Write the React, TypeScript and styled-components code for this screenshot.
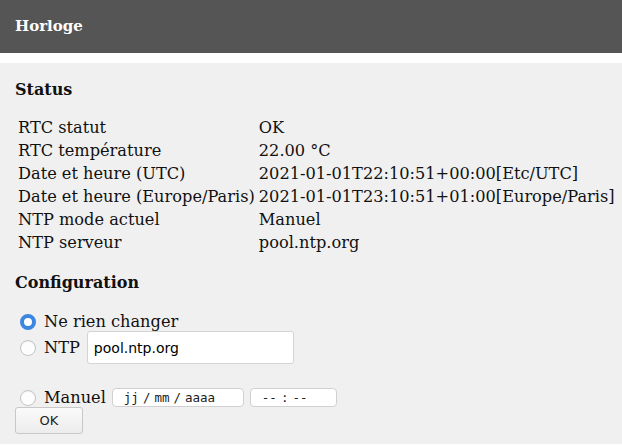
import React from 'react'
import styled, { createGlobalStyle } from 'styled-components'

const GlobalStyle = createGlobalStyle`
  html, body {
    margin: 0;
    padding: 0;
    background: #ffffff;
  }
  body {
    font-family: "DejaVu Serif", serif;
    color: #111;
  }
`

const TopBar = styled.header`
  height: 53px;
  background: #555555;
  display: flex;
  align-items: center;
  padding-left: 15px;
  margin-bottom: 10px;
`

const Title = styled.h1`
  margin: 0 0 2px;
  font-size: 15px;
  font-weight: 700;
  color: #ffffff;
`

const Panel = styled.main`
  background: #f0f0f0;
  padding: 16px 15px 10px;
  min-height: 372px;
  box-sizing: border-box;
`

const SectionTitle = styled.h2<{ $after?: number }>`
  margin: 0 0 ${p => p.$after ?? 14}px;
  font-size: 16px;
  font-weight: 700;
  line-height: 22px;
`

const StatusTable = styled.table`
  border-collapse: separate;
  border-spacing: 2px;
  font-size: 16.2px;
  margin-bottom: 17px;

  td {
    padding: 1px 1px;
    line-height: 19px;
    white-space: nowrap;
  }
`

const OptionRow = styled.label<{ $gap?: number }>`
  display: flex;
  align-items: center;
  font-size: 16.2px;
  margin-top: ${p => p.$gap ?? 0}px;
`

const Radio = styled.input.attrs({ type: 'radio', name: 'mode' })`
  appearance: none;
  width: 16px;
  height: 16px;
  margin: 0 8px 0 5px;
  box-sizing: border-box;
  border-radius: 50%;
  border: 1px solid #c4c4c4;
  background: #fdfdfd;
  box-shadow: inset 0 1px 1px rgba(0, 0, 0, 0.06);

  &:checked {
    border: 4.5px solid #3d86e0;
    background: #ffffff;
    box-shadow: none;
  }
`

const TextField = styled.input`
  font-family: "DejaVu Sans", sans-serif;
  font-size: 14px;
  margin-left: 7px;
  width: 207px;
  height: 33px;
  box-sizing: border-box;
  padding: 0 6px;
  border: 1px solid #d4d4d4;
  border-radius: 3px;
  background: #fff;
`

const SmallField = styled.span<{ $w: number }>`
  display: inline-flex;
  align-items: center;
  gap: 4px;
  width: ${p => p.$w}px;
  height: 19px;
  box-sizing: border-box;
  padding-left: 11px;
  margin-left: 6px;
  border: 1px solid #d0d0d0;
  border-radius: 4px;
  background: #fff;
  font-family: "DejaVu Sans Mono", monospace;
  font-size: 12.5px;
  color: #222;
  white-space: pre;
`

const Button = styled.button`
  display: block;
  width: 68px;
  height: 27px;
  margin-top: 0;
  font-family: "DejaVu Sans", sans-serif;
  font-size: 13px;
  color: #222;
  background: linear-gradient(#fafafa, #ececec);
  border: 1px solid #c8c8c8;
  border-radius: 3px;
`

const rows: [string, string][] = [
  ['RTC statut', 'OK'],
  ['RTC température', '22.00 °C'],
  ['Date et heure (UTC)', '2021-01-01T22:10:51+00:00[Etc/UTC]'],
  ['Date et heure (Europe/Paris)', '2021-01-01T23:10:51+01:00[Europe/Paris]'],
  ['NTP mode actuel', 'Manuel'],
  ['NTP serveur', 'pool.ntp.org'],
]

export default function App() {
  return (
    <>
      <GlobalStyle />
      <TopBar>
        <Title>Horloge</Title>
      </TopBar>
      <Panel>
        <SectionTitle>Status</SectionTitle>
        <StatusTable>
          <tbody>
            {rows.map(([k, v]) => (
              <tr key={k}>
                <td>{k}</td>
                <td>{v}</td>
              </tr>
            ))}
          </tbody>
        </StatusTable>
        <SectionTitle $after={18}>Configuration</SectionTitle>
        <OptionRow>
          <Radio defaultChecked />
          Ne rien changer
        </OptionRow>
        <OptionRow>
          <Radio />
          NTP
          <TextField defaultValue="pool.ntp.org" />
        </OptionRow>
        <OptionRow $gap={24}>
          <Radio />
          Manuel
          <SmallField $w={132}>
            <span>jj</span>
            <span>/</span>
            <span>mm</span>
            <span>/</span>
            <span>aaaa</span>
          </SmallField>
          <SmallField $w={87}>
            <span>--</span>
            <span>:</span>
            <span>--</span>
          </SmallField>
        </OptionRow>
        <Button>OK</Button>
      </Panel>
    </>
  )
}
